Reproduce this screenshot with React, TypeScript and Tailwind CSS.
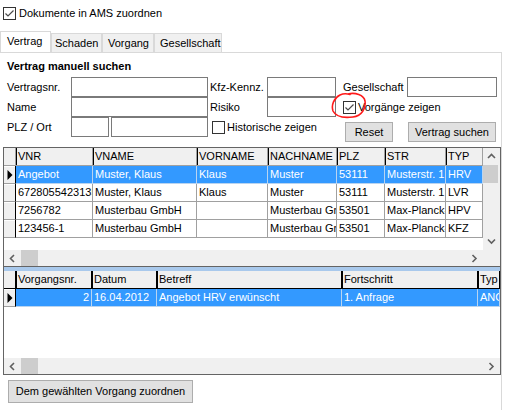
import React from 'react';

type Col = { label: string; w: string; right?: boolean };

const vertragCols: Col[] = [
  { label: 'VNR', w: 'w-[77px]' },
  { label: 'VNAME', w: 'w-[104px]' },
  { label: 'VORNAME', w: 'w-[71px]' },
  { label: 'NACHNAME', w: 'w-[69px]' },
  { label: 'PLZ', w: 'w-[48px]' },
  { label: 'STR', w: 'w-[61px]' },
  { label: 'TYP', w: 'w-[37px]' },
];

const vertragRows = [
  ['Angebot', 'Muster, Klaus', 'Klaus', 'Muster', '53111', 'Musterstr. 1', 'HRV'],
  ['6728055423135', 'Muster, Klaus', 'Klaus', 'Muster', '53111', 'Musterstr. 1', 'LVR'],
  ['7256782', 'Musterbau GmbH', '', 'Musterbau GmbH', '53501', 'Max-Planck-Str. 4', 'HPV'],
  ['123456-1', 'Musterbau GmbH', '', 'Musterbau GmbH', '53501', 'Max-Planck-Str. 4', 'KFZ'],
];

const vorgangCols: Col[] = [
  { label: 'Vorgangsnr.', w: 'w-[76px]', right: true },
  { label: 'Datum', w: 'w-[65px]' },
  { label: 'Betreff', w: 'w-[185px]' },
  { label: 'Fortschritt', w: 'w-[136px]' },
  { label: 'Typ', w: 'w-[22px]' },
];

const vorgangRows = [['2', '16.04.2012', 'Angebot HRV erwünscht', '1. Anfrage', 'ANGEBOT']];

function CheckBox({ checked }: { checked?: boolean }) {
  return (
    <span className="inline-flex h-[13px] w-[13px] shrink-0 items-center justify-center border border-[#333333] bg-white">
      {checked && (
        <svg width="11" height="11" viewBox="0 0 11 11">
          <path d="M1.5 5.5 L4 8 L9.5 2.5" fill="none" stroke="#4a4a4a" strokeWidth="1.2" />
        </svg>
      )}
    </span>
  );
}

function Chevron({ dir }: { dir: 'up' | 'down' | 'left' | 'right' }) {
  const paths = {
    up: 'M1 5 L4.5 1.5 L8 5',
    down: 'M1 1.5 L4.5 5 L8 1.5',
    left: 'M5 1 L1.5 4.5 L5 8',
    right: 'M1.5 1 L5 4.5 L1.5 8',
  };
  const vertical = dir === 'up' || dir === 'down';
  return (
    <svg width={vertical ? 9 : 7} height={vertical ? 7 : 9} viewBox={vertical ? '0 0 9 7' : '0 0 7 9'}>
      <path d={paths[dir]} fill="none" stroke="#606060" strokeWidth="1.6" />
    </svg>
  );
}

function HScroll({ wide }: { wide?: boolean }) {
  return (
    <div className={`flex h-[16px] items-center bg-[#f0f0f0] ${wide ? 'w-[496px]' : 'w-[479px]'}`}>
      <div className="flex w-[17px] justify-center">
        <Chevron dir="left" />
      </div>
      <div className="h-full w-[17px] bg-[#cdcdcd]" />
      <div className="flex-1" />
      <div className="flex w-[17px] justify-center">
        <Chevron dir="right" />
      </div>
    </div>
  );
}

function Triangle() {
  return (
    <svg width="6" height="10" viewBox="0 0 6 10">
      <path d="M0.5 0 L5.5 5 L0.5 10 Z" fill="#000" />
    </svg>
  );
}

function GridHeader({ cols, strong }: { cols: Col[]; strong?: boolean }) {
  const edge = strong ? 'border-[#000000]' : 'border-[#a0a0a0]';
  return (
    <div className="flex h-[18px]">
      <div className={`w-[12px] shrink-0 border-r border-b bg-[#f0f0f0] ${edge}`} />
      {cols.map((c) => (
        <div
          key={c.label}
          className={`flex shrink-0 items-center overflow-hidden whitespace-nowrap border-r border-b bg-[#f0f0f0] pl-[2px] shadow-[inset_1px_0_0_#000] ${edge} ${c.w}`}
        >
          {c.label}
        </div>
      ))}
    </div>
  );
}

function GridRow({ cols, cells, selected, current }: { cols: Col[]; cells: string[]; selected?: boolean; current?: boolean }) {
  return (
    <div className="flex h-[18px]">
      <div className="flex w-[12px] shrink-0 items-center justify-center border-r border-b border-r-[#000000] border-b-[#a0a0a0] bg-[#f0f0f0] shadow-[inset_0_1px_0_#ffffff]">
        {current && <Triangle />}
      </div>
      {cols.map((c, i) => (
        <div
          key={c.label}
          className={`flex shrink-0 items-center overflow-hidden whitespace-nowrap border-r border-b px-[2px] ${c.w} ${
            c.right ? 'justify-end' : ''
          } ${selected ? 'border-[#b9d4f0] bg-[#3399ff] text-white' : 'border-[#a0a0a0] bg-white text-black'}`}
        >
          {cells[i]}
        </div>
      ))}
    </div>
  );
}

export default function App() {
  const input = 'h-[20px] shrink-0 border border-[#7a7a7a] bg-white';
  const button = 'flex h-[20px] shrink-0 items-center justify-center border border-[#adadad] bg-[#e1e1e1]';

  return (
    <div className="h-[410px] w-[508px] overflow-hidden bg-white font-['Liberation_Sans',Arial,sans-serif] text-[11px] leading-[13px] text-black">
      {/* top checkbox */}
      <div className="flex h-[20px] items-start gap-[3px] pl-[3px] pt-[7px]">
        <CheckBox checked />
        <span>Dokumente in AMS zuordnen</span>
      </div>

      {/* tabs */}
      <div className="mt-[11px] flex h-[21px] items-end">
        <div className="flex h-[21px] w-[51px] items-center border border-b-0 border-[#d9d9d9] bg-white pb-[2px] pl-[6px]">
          Vertrag
        </div>
        <div className="flex h-[19px] w-[51px] items-center border border-b-0 border-[#d9d9d9] bg-[#f0f0f0] pl-[3px]">
          Schaden
        </div>
        <div className="flex h-[19px] w-[52px] items-center border border-b-0 border-[#d9d9d9] bg-[#f0f0f0] pl-[5px]">
          Vorgang
        </div>
        <div className="flex h-[19px] w-[68px] items-center border border-b-0 border-[#d9d9d9] bg-[#f0f0f0] pl-[5px]">
          Gesellschaft
        </div>
      </div>

      {/* panel */}
      <div className="h-[358px] w-[502px] border-t border-r border-[#d9d9d9] bg-white">
        <div className="pl-[7px] pt-[7px] font-bold">Vertrag manuell suchen</div>

        <div className="mt-[4px] pl-[7px]">
          <div className="flex h-[20px] items-center">
            <span className="w-[64px] shrink-0">Vertragsnr.</span>
            <div className={`${input} w-[137px]`} />
            <span className="w-[59px] shrink-0 pl-[2px]">Kfz-Kennz.</span>
            <div className={`${input} w-[69px]`} />
            <span className="w-[71px] shrink-0 pl-[7px]">Gesellschaft</span>
            <div className={`${input} w-[90px]`} />
          </div>
          <div className="flex h-[20px] items-center">
            <span className="w-[64px] shrink-0">Name</span>
            <div className={`${input} w-[137px]`} />
            <span className="w-[59px] shrink-0 pl-[2px]">Risiko</span>
            <div className={`${input} w-[69px]`} />
            <div className="relative ml-[7px] flex items-center gap-[2px]">
              <CheckBox checked />
              <span>Vorgänge zeigen</span>
              <svg
                className="pointer-events-none absolute left-[-12px] top-[-9px]"
                width="38"
                height="28"
                viewBox="0 0 38 28"
              >
                <path
                  d="M17 2 C24 0, 33 3, 34 9 C35 16, 31 24, 22 25 C14 26, 5 25, 2 19 C0 13, 3 6, 9 3 C12 1.5, 16 1.5, 19 2.5"
                  fill="none"
                  stroke="#ff1a1a"
                  strokeWidth="1.6"
                  strokeLinecap="round"
                />
              </svg>
            </div>
          </div>
          <div className="flex h-[20px] items-center">
            <span className="w-[64px] shrink-0">PLZ / Ort</span>
            <div className={`${input} w-[38px]`} />
            <div className={`${input} ml-[2px] w-[97px]`} />
            <div className="ml-[4px] flex w-[133px] shrink-0 items-center gap-[2px]">
              <CheckBox />
              <span>Historische zeigen</span>
            </div>
            <div className="flex translate-y-[5px]">
              <div className={`${button} w-[48px]`}>Reset</div>
              <div className={`${button} ml-[15px] w-[88px]`}>Vertrag suchen</div>
            </div>
          </div>
        </div>

        {/* vertrag grid */}
        <div className="ml-[3px] mt-[10px] flex h-[120px] w-[498px] flex-col border border-[#646464]">
          <div className="flex h-[102px]">
            <div className="flex w-[479px] flex-col bg-white">
              <GridHeader cols={vertragCols} />
              {vertragRows.map((r, i) => (
                <GridRow key={i} cols={vertragCols} cells={r} selected={i === 0} current={i === 0} />
              ))}
            </div>
            <div className="flex w-[17px] flex-col bg-[#f0f0f0]">
              <div className="flex h-[17px] items-center justify-center">
                <Chevron dir="up" />
              </div>
              <div className="mr-[2px] h-[18px] bg-[#cdcdcd]" />
              <div className="flex-1" />
              <div className="flex h-[17px] items-center justify-center">
                <Chevron dir="down" />
              </div>
            </div>
          </div>
          <div className="flex h-[16px]">
            <HScroll />
            <div className="w-[17px] bg-[#f0f0f0]" />
          </div>
        </div>

        {/* vorgang grid */}
        <div className="ml-[3px] flex h-[108px] w-[498px] flex-col border-x border-b border-[#646464]">
          <div className="h-[4px] bg-[#a9c9ec]" />
          <div className="flex flex-1 flex-col overflow-hidden bg-white">
            <GridHeader cols={vorgangCols} strong />
            {vorgangRows.map((r, i) => (
              <GridRow key={i} cols={vorgangCols} cells={r} selected current />
            ))}
          </div>
          <HScroll wide />
        </div>

        <div className="ml-[8px] mt-[5px] flex h-[23px] w-[185px] items-center justify-center border border-[#adadad] bg-[#e1e1e1]">
          Dem gewählten Vorgang zuordnen
        </div>
      </div>
    </div>
  );
}
